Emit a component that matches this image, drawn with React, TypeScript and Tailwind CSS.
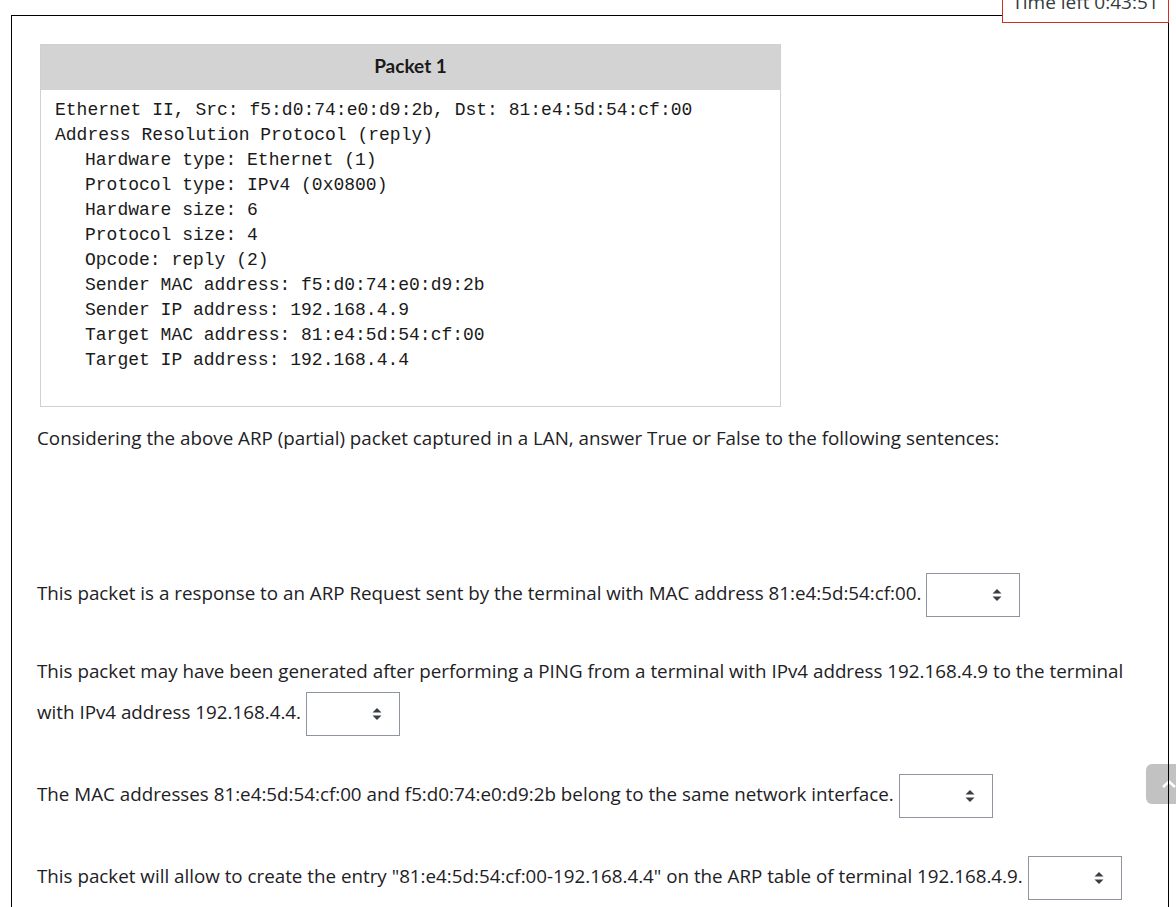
const lines: { text: string; indent?: boolean }[] = [
  { text: "Ethernet II, Src: f5:d0:74:e0:d9:2b, Dst: 81:e4:5d:54:cf:00" },
  { text: "Address Resolution Protocol (reply)" },
  { text: "Hardware type: Ethernet (1)", indent: true },
  { text: "Protocol type: IPv4 (0x0800)", indent: true },
  { text: "Hardware size: 6", indent: true },
  { text: "Protocol size: 4", indent: true },
  { text: "Opcode: reply (2)", indent: true },
  { text: "Sender MAC address: f5:d0:74:e0:d9:2b", indent: true },
  { text: "Sender IP address: 192.168.4.9", indent: true },
  { text: "Target MAC address: 81:e4:5d:54:cf:00", indent: true },
  { text: "Target IP address: 192.168.4.4", indent: true },
];

const Choice = () => (
  <span className="relative inline-block align-middle w-[94px] h-[44px]">
    <select
      defaultValue=""
      className="appearance-none w-full h-full bg-white border border-[#8f959e] rounded-none px-3 text-[19px] text-[#1d2125] outline-none"
    >
      <option value=""></option>
      <option value="true">True</option>
      <option value="false">False</option>
    </select>
    <svg
      className="pointer-events-none absolute right-[18px] top-[15px]"
      width="10"
      height="14"
      viewBox="0 0 10 14"
    >
      <path d="M5 1 L9.5 5.5 L0.5 5.5 Z" fill="#3a3f44" />
      <path d="M5 13 L9.5 8.5 L0.5 8.5 Z" fill="#3a3f44" />
    </svg>
  </span>
);

export default function App() {
  return (
    <div className="relative w-full h-[907px] overflow-hidden bg-white">
      <div className="absolute left-[1146px] top-[764px] w-[40px] h-[40px] rounded-[6px] bg-[#c2c2c2] flex items-center pl-[16px] z-0">
        <svg width="14" height="8" viewBox="0 0 14 8">
          <polyline points="1,7 7,1.5 13,7" fill="none" stroke="#ffffff" strokeWidth="2.5" />
        </svg>
      </div>

      <div className="absolute left-[1002px] top-[-20px] w-[167px] h-[43px] border border-[#ca3120] bg-white z-20 flex items-center justify-center">
        <span className="text-[19px] text-[#343a40] font-['Open_Sans',sans-serif] pt-[2px]">Time left 0:43:51</span>
      </div>

      <div className="relative z-10 ml-[11px] mt-[15px] w-[1158px] h-[920px] border-t border-l border-r border-black pt-[28px] pl-[25px] pr-[30px] font-['Open_Sans',sans-serif] text-[18.8px] text-[#1d2125]">
        <div className="ml-[3px] w-[741px] border border-[#d0d0d0]">
          <div className="h-[45px] bg-[#d3d3d3] flex items-center justify-center pb-[3px]">
            <span className="font-['Lato',sans-serif] font-bold text-[19px] text-[#1a1a1a]">Packet 1</span>
          </div>
          <div className="h-[316px] bg-white pt-[8px] pl-[14px] font-['Liberation_Mono',monospace] text-[18px] leading-[25px] text-[#1a1a1a] whitespace-pre">
            {lines.map((l, i) => (
              <div key={i} className={l.indent ? "pl-[30px]" : ""}>
                {l.text}
              </div>
            ))}
          </div>
        </div>

        <p className="mt-[11px] leading-[41px]">
          Considering the above ARP (partial) packet captured in a LAN, answer True or False to the following sentences:
        </p>

        <p className="mt-[113px] leading-[41px] pt-[1px]">
          This packet is a response to an ARP Request sent by the terminal with MAC address 81:e4:5d:54:cf:00. <Choice />
        </p>

        <p className="mt-[34px] leading-[41px]">
          This packet may have been generated after performing a PING from a terminal with IPv4 address 192.168.4.9 to the terminal with IPv4 address 192.168.4.4. <Choice />
        </p>

        <p className="mt-[38px] leading-[41px]">
          The MAC addresses 81:e4:5d:54:cf:00 and f5:d0:74:e0:d9:2b belong to the same network interface. <Choice />
        </p>

        <p className="mt-[38px] leading-[41px]">
          This packet will allow to create the entry "81:e4:5d:54:cf:00-192.168.4.4" on the ARP table of terminal 192.168.4.9. <Choice />
        </p>
      </div>
    </div>
  );
}
